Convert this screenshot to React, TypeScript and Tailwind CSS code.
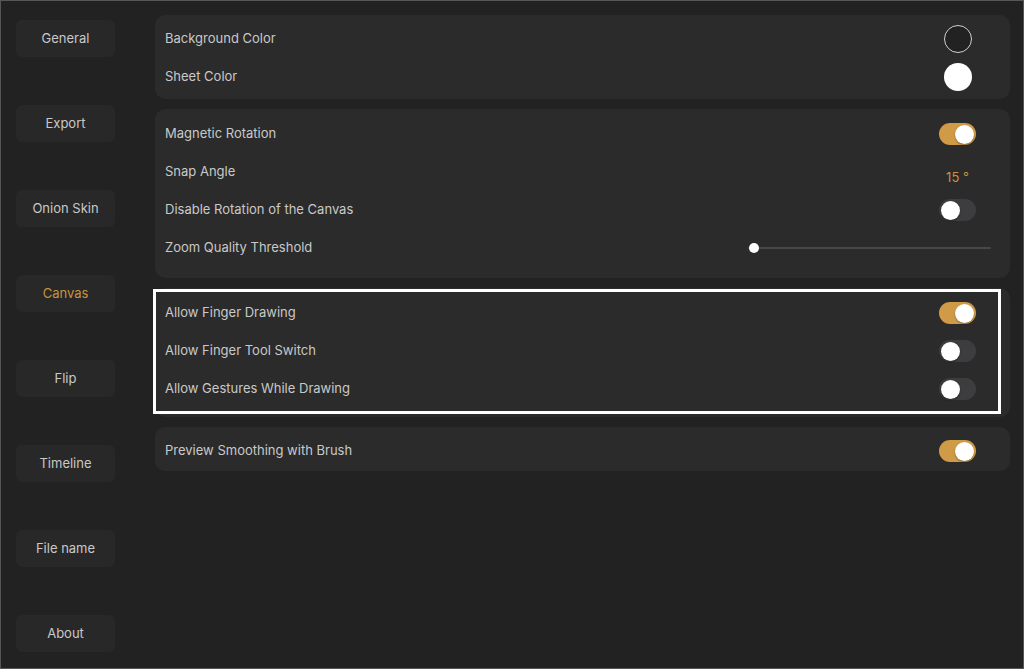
import React from "react";

const font = { fontFamily: "Inter, 'Liberation Sans', sans-serif" };

const navItems = ["General", "Export", "Onion Skin", "Canvas", "Flip", "Timeline", "File name", "About"];

const Toggle = ({ on = false }: { on?: boolean }) => (
  <div
    className={`w-[37px] h-[22px] rounded-full flex items-center px-[2px] ${
      on ? "bg-[#d09b47] justify-end" : "bg-[#3d3d3f] justify-start"
    }`}>
    <div className="w-[19px] h-[19px] rounded-full bg-white shadow-[0_1px_2px_rgba(0,0,0,0.35)]" />
  </div>
);

const Row = ({ label, children }: { label: string; children?: React.ReactNode }) => (
  <div className="h-[38px] flex items-center pl-[10px] pr-[34px]">
    <span className="flex-1 text-[13px] text-[#c9c9c9]">{label}</span>
    <div className="w-[37px] flex justify-center items-center">{children}</div>
  </div>
);

const Panel = ({ children, className = "" }: { children: React.ReactNode; className?: string }) => (
  <div className={`relative bg-[#2b2b2b] rounded-[10px] ${className}`}>{children}</div>
);

export default function App() {
  return (
    <div
      className="w-[1024px] h-[669px] bg-[#222222] border border-[#575757] flex overflow-hidden"
      style={font}>
      <div className="w-[154px] shrink-0 pl-[15px] pt-[19px] flex flex-col gap-[48px]">
        {navItems.map((item) => (
          <div
            key={item}
            className={`w-[99px] h-[37px] rounded-[6px] bg-[#282828] flex items-center justify-center text-[13px] ${
              item === "Canvas" ? "text-[#c8923f]" : "text-[#c9c9c9]"
            }`}>
            {item}
          </div>
        ))}
      </div>

      <div className="flex-1 pt-[14px] pr-[13px] flex flex-col gap-[10px]">
        <Panel className="pt-[5px] pb-[3px]">
          <Row label="Background Color">
            <div className="w-[28px] h-[28px] rounded-full bg-[#222222] border-[1.5px] border-[#d0d0d0]" />
          </Row>
          <Row label="Sheet Color">
            <div className="w-[28px] h-[28px] rounded-full bg-white" />
          </Row>
        </Panel>

        <Panel className="pt-[6px] pb-[12px]">
          <Row label="Magnetic Rotation">
            <Toggle on />
          </Row>
          <Row label="Snap Angle">
            <span className="text-[13px] text-[#c8923f] whitespace-nowrap mt-[12px]">15 °</span>
          </Row>
          <Row label="Disable Rotation of the Canvas">
            <Toggle />
          </Row>
          <div className="h-[37px] flex items-center pl-[10px] pr-[19px]">
            <span className="flex-1 text-[13px] text-[#c9c9c9]">Zoom Quality Threshold</span>
            <div className="relative w-[243px] h-[10px] flex items-center">
              <div className="w-full h-[2px] bg-[#474747] rounded-full" />
              <div className="absolute left-[1px] top-0 w-[10px] h-[10px] rounded-full bg-white" />
            </div>
          </div>
        </Panel>

        <Panel className="pt-[6px] pb-[9px]">
          <Row label="Allow Finger Drawing">
            <Toggle on />
          </Row>
          <Row label="Allow Finger Tool Switch">
            <Toggle />
          </Row>
          <Row label="Allow Gestures While Drawing">
            <Toggle />
          </Row>
          <div className="absolute left-[-2px] top-[1px] w-[848px] h-[125px] border-[3px] border-white pointer-events-none" />
        </Panel>

        <Panel className="pt-[5px] pb-[1px]">
          <Row label="Preview Smoothing with Brush">
            <Toggle on />
          </Row>
        </Panel>
      </div>
    </div>
  );
}
